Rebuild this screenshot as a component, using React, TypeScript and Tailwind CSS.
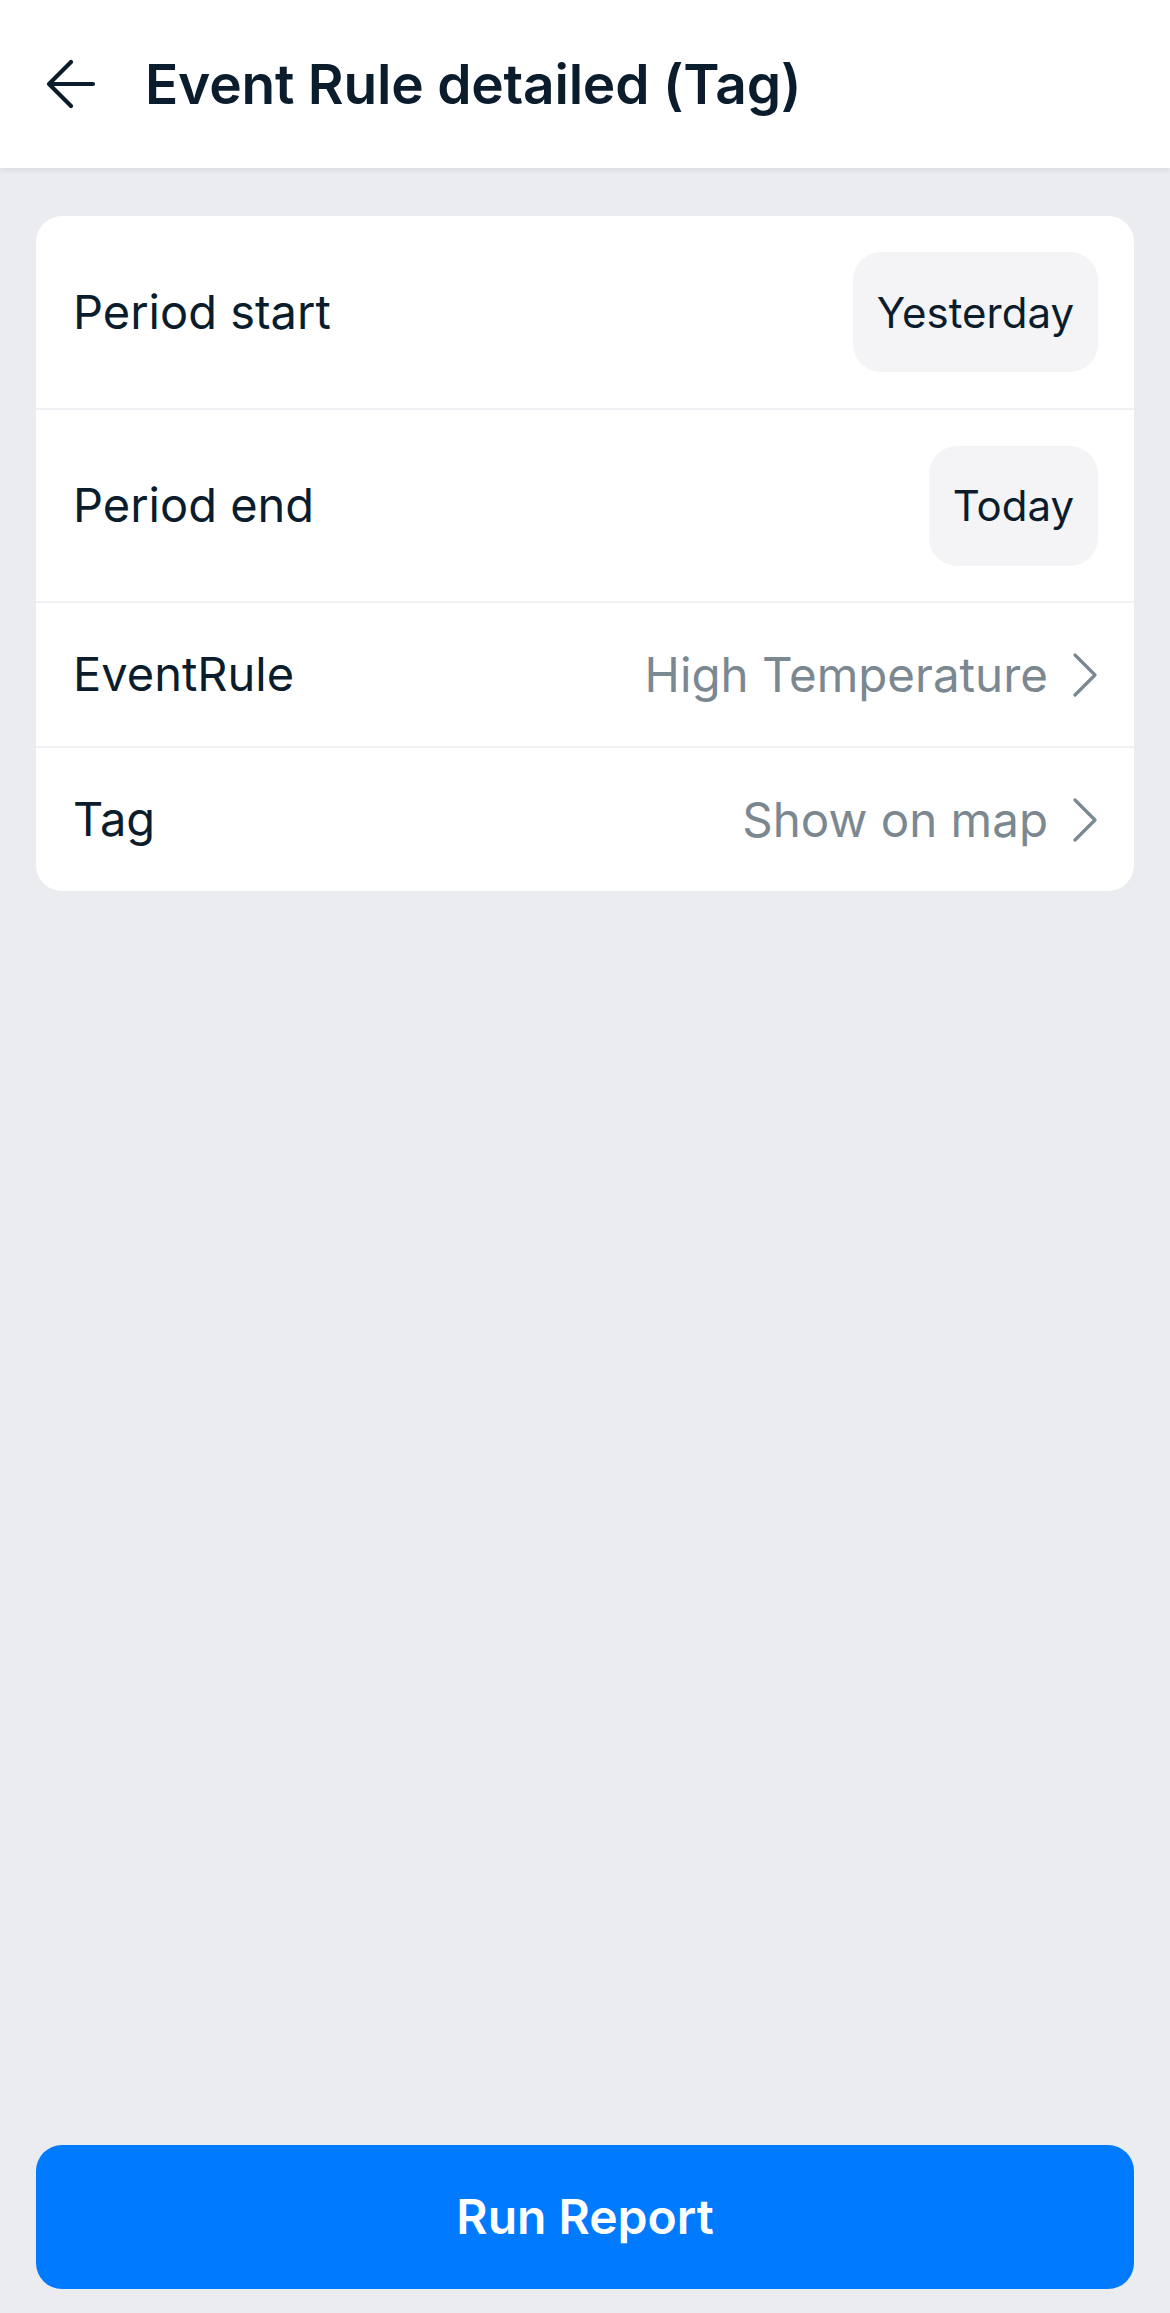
import React from 'react';

interface Row {
  label: string;
  value: string;
  kind: 'pill' | 'link';
  height: string;
}

const rows: Row[] = [
  { label: 'Period start', value: 'Yesterday', kind: 'pill', height: 'h-[192px]' },
  { label: 'Period end', value: 'Today', kind: 'pill', height: 'h-[193px]' },
  { label: 'EventRule', value: 'High Temperature', kind: 'link', height: 'h-[145px]' },
  { label: 'Tag', value: 'Show on map', kind: 'link', height: 'h-[145px]' },
];

function BackArrow() {
  return (
    <svg width="50" height="50" viewBox="0 0 50 50" fill="none" stroke="#0B1D2C" strokeWidth="4.2" strokeLinecap="round" strokeLinejoin="round">
      <path d="M25 3 3 25l22 22" />
      <path d="M4 25h43" />
    </svg>
  );
}

function Chevron() {
  return (
    <svg width="26" height="44" viewBox="0 0 26 44" fill="none" stroke="#7C8891" strokeWidth="3.2" strokeLinecap="round" strokeLinejoin="round">
      <path d="M3 2l20 20-20 20" />
    </svg>
  );
}

export default function App() {
  return (
    <div
      className="w-full h-[2313px] flex flex-col bg-[#EBECF0]"
      style={{ fontFamily: 'Inter, "Noto Sans", sans-serif' }}
    >
      {/* Header */}
      <div className="h-[168px] shrink-0 bg-white flex items-center pl-[46px] shadow-[0_2px_6px_rgba(0,0,0,0.08)] relative z-10">
        <BackArrow />
        <h1 className="ml-[49px] text-[55px] font-semibold text-[#0B1D2C] tracking-[-0.2px]">
          Event Rule detailed (Tag)
        </h1>
      </div>

      {/* Settings card */}
      <div className="px-[36px] pt-[48px]">
        <div className="bg-white rounded-[26px] overflow-hidden">
          {rows.map((row, i) => (
            <div
              key={row.label}
              className={`flex items-center justify-between pl-[37px] pr-[36px] ${row.height} ${
                i > 0 ? 'border-t-2 border-[#EFF0F3]' : ''
              }`}
            >
              <span className="text-[47px] text-[#0B1D2C]">{row.label}</span>
              {row.kind === 'pill' ? (
                <span className="h-[120px] px-[24px] flex items-center rounded-[28px] bg-[#F4F4F7] text-[42px] text-[#0B1D2C]">
                  {row.value}
                </span>
              ) : (
                <span className="flex items-center gap-[24px]">
                  <span className="text-[47.5px] text-[#7C8891]">{row.value}</span>
                  <Chevron />
                </span>
              )}
            </div>
          ))}
        </div>
      </div>

      <div className="flex-1" />

      {/* Footer button */}
      <div className="px-[36px] pb-[24px]">
        <button className="w-full h-[144px] rounded-[26px] bg-[#007AFF] text-white text-[48px] font-semibold">
          Run Report
        </button>
      </div>
    </div>
  );
}
